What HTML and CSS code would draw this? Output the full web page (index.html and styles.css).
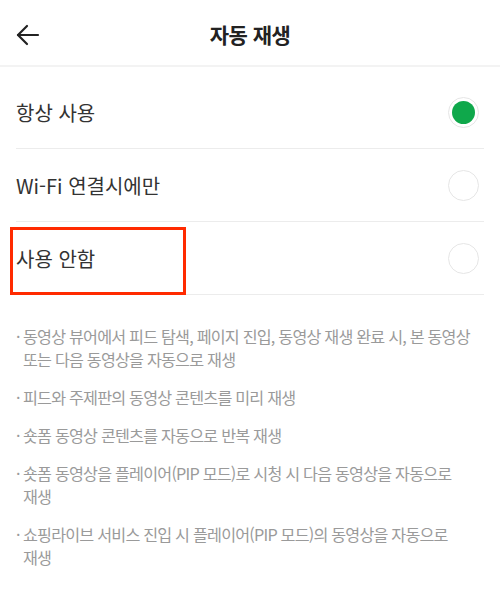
FILE: index.html
```html
<!DOCTYPE html>
<html lang="ko">
<head>
    <meta charset="UTF-8">
    <meta name="viewport" content="width=device-width, initial-scale=1.0">
    <title>자동 재생</title>
    <link rel="stylesheet" href="styles.css">
</head>
<body>
    <header class="topbar">
        <button class="back" aria-label="뒤로">
            <svg width="26" height="26" viewBox="0 0 26 26" fill="none" stroke="#222" stroke-width="2.2" stroke-linecap="round" stroke-linejoin="round">
                <path d="M23 13H3"/>
                <path d="M12 4L3 13l9 9"/>
            </svg>
        </button>
        <h1 class="title">자동 재생</h1>
    </header>
    <ul class="options">
        <li class="option">
            <span class="label">항상 사용</span>
            <span class="radio checked"></span>
        </li>
        <li class="option">
            <span class="label">Wi-Fi 연결시에만</span>
            <span class="radio"></span>
        </li>
        <li class="option marked">
            <span class="label">사용 안함</span>
            <span class="radio"></span>
            <span class="highlight"></span>
        </li>
    </ul>
    <ul class="notes">
        <li>동영상 뷰어에서 피드 탐색, 페이지 진입, 동영상 재생 완료 시, 본 동영상 또는 다음 동영상을 자동으로 재생</li>
        <li>피드와 주제판의 동영상 콘텐츠를 미리 재생</li>
        <li>숏폼 동영상 콘텐츠를 자동으로 반복 재생</li>
        <li>숏폼 동영상을 플레이어(PIP 모드)로 시청 시 다음 동영상을 자동으로<br>재생</li>
        <li>쇼핑라이브 서비스 진입 시 플레이어(PIP 모드)의 동영상을 자동으로<br>재생</li>
    </ul>
</body>
</html>
```

FILE: styles.css
```css
body {
    margin: 0;
    background: #fff;
    font-family: "Noto Sans CJK KR", "Noto Sans", sans-serif;
    color: #333;
}
.topbar {
    position: relative;
    height: 65px;
    display: flex;
    align-items: center;
    justify-content: center;
    border-bottom: 2px solid #f3f3f3;
}
.back {
    position: absolute;
    left: 15px;
    top: 22px;
    padding: 0;
    border: 0;
    background: none;
    display: flex;
}
.title {
    margin: 2px 0 0;
    font-size: 21px;
    font-weight: 700;
    color: #222;
    letter-spacing: -0.5px;
}
.options {
    list-style: none;
    margin: 0;
    padding: 9px 16px 0;
}
.option {
    position: relative;
    height: 72px;
    display: flex;
    align-items: center;
    justify-content: space-between;
    border-bottom: 1px solid #ececec;
}
.label {
    font-size: 20px;
    color: #333;
}
.radio {
    width: 29px;
    height: 29px;
    border: 1.5px solid #e6e6e6;
    border-radius: 50%;
    margin-right: 5px;
    display: flex;
    align-items: center;
    justify-content: center;
}
.radio.checked::after {
    content: "";
    width: 23px;
    height: 23px;
    border-radius: 50%;
    background: #0fa84b;
}
.highlight {
    position: absolute;
    left: -6px;
    top: 5px;
    width: 170px;
    height: 62px;
    border: 3px solid #ff2a00;
}
.notes {
    list-style: none;
    margin: 0;
    padding: 30px 16px 0;
}
.notes li {
    position: relative;
    padding-left: 7px;
    margin-bottom: 15px;
    font-size: 16.2px;
    line-height: 23px;
    color: #9a9a9a;
    letter-spacing: -0.8px;
    word-break: keep-all;
}
.notes li::before {
    content: "·";
    position: absolute;
    left: 0;
    top: 0;
}
```
